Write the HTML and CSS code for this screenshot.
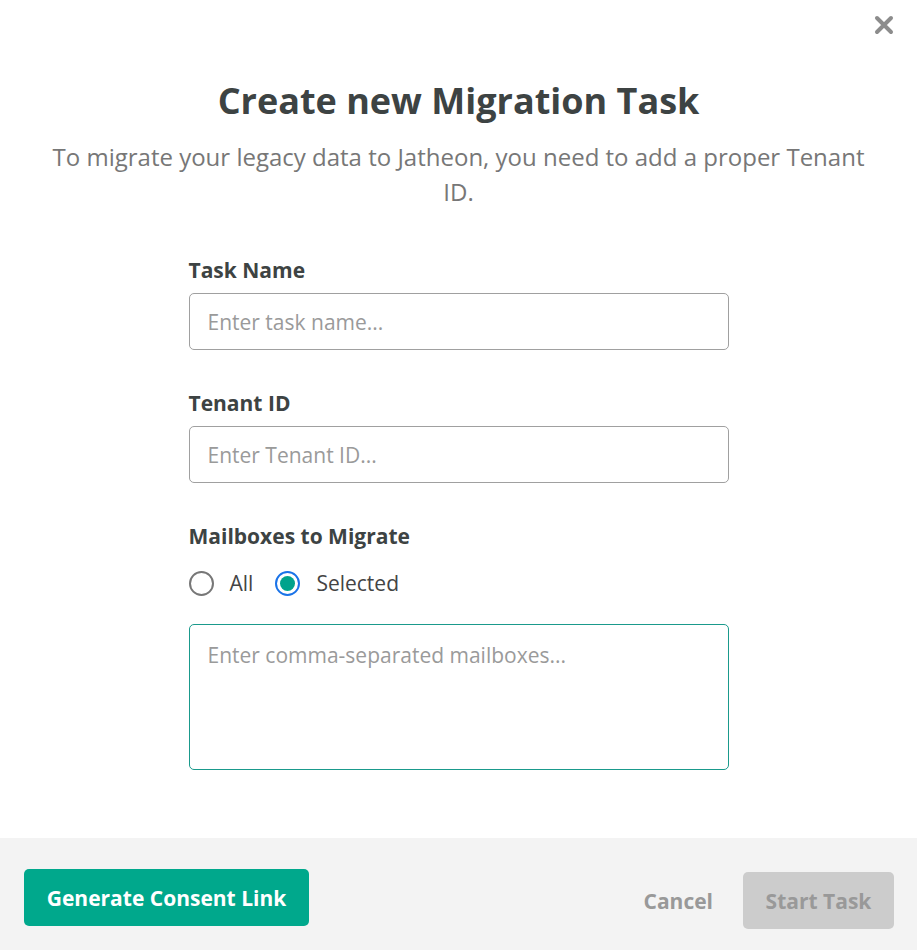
FILE: index.html
```html
<!DOCTYPE html>
<html>
<head>
<meta charset="utf-8">
<link rel="stylesheet" href="styles.css">
</head>
<body>
<div class="modal">
  <div class="body">
    <button class="close" aria-label="Close">
      <svg width="20" height="20" viewBox="0 0 20 20"><path d="M3 3 L17 17 M17 3 L3 17" stroke="#8c8c8c" stroke-width="4" stroke-linecap="round"/></svg>
    </button>
    <h1 class="title">Create new Migration Task</h1>
    <p class="subtitle">To migrate your legacy data to Jatheon, you need to add a proper Tenant ID.</p>
    <form class="form">
      <div class="field">
        <label class="label">Task Name</label>
        <input class="input" type="text" placeholder="Enter task name...">
      </div>
      <div class="field">
        <label class="label">Tenant ID</label>
        <input class="input" type="text" placeholder="Enter Tenant ID...">
      </div>
      <div class="field">
        <label class="label">Mailboxes to Migrate</label>
        <div class="radios">
          <span class="radio"><span class="circle"></span><span class="rtext">All</span></span>
          <span class="radio"><span class="circle on"></span><span class="rtext">Selected</span></span>
        </div>
        <textarea class="textarea" placeholder="Enter comma-separated mailboxes..."></textarea>
      </div>
    </form>
  </div>
  <div class="footer">
    <button class="btn primary" type="button">Generate Consent Link</button>
    <div class="right">
      <button class="btn link" type="button">Cancel</button>
      <button class="btn disabled" type="button">Start Task</button>
    </div>
  </div>
</div>
</body>
</html>
```
FILE: styles.css
```css
* { box-sizing: border-box; }
html, body { margin: 0; padding: 0; background: #fff; }
body { font-family: "Open Sans", "Noto Sans", sans-serif; color: #3d4343; }
.modal { width: 917px; height: 950px; display: flex; flex-direction: column; }
.body { flex: 1; position: relative; padding-top: 77px; }
.close { position: absolute; top: 15px; right: 23px; border: 0; background: none; padding: 0; width: 20px; height: 20px; cursor: pointer; }
.close svg { display: block; }
.title { margin: 0; text-align: center; font-size: 36px; font-weight: 700; line-height: 48px; color: #3d4343; }
.subtitle { margin: 14px 0 0; padding: 0 40px; text-align: center; font-size: 24px; line-height: 35px; color: #777; }
.form { width: 540px; margin: 47px auto 0; display: flex; flex-direction: column; gap: 39px; }
.field { display: flex; flex-direction: column; }
.label { font-size: 21px; font-weight: 700; line-height: 28px; margin-bottom: 9px; color: #3d4343; }
.input { height: 57px; border: 1px solid #a0a0a0; border-radius: 5px; padding: 0 18px; font-family: inherit; font-size: 21px; color: #333; outline: none; }
.input::placeholder, .textarea::placeholder { color: #9a9a9a; }
.radios { display: flex; gap: 22px; align-items: center; height: 36px; margin-top: 6px; }
.radio { display: flex; align-items: center; gap: 16px; font-size: 21px; color: #444; }
.circle { width: 25px; height: 25px; border: 2px solid #777; border-radius: 50%; display: inline-block; position: relative; }
.circle.on { border-color: #1a73e8; }
.circle.on::after { content: ""; position: absolute; left: 3px; top: 3px; width: 15px; height: 15px; border-radius: 50%; background: #00a38c; }
.textarea { margin-top: 23px; height: 146px; border: 1px solid #1a9a8c; border-radius: 5px; padding: 16px 18px; font-family: inherit; font-size: 21px; line-height: 28px; resize: none; outline: none; }
.footer { height: 112px; background: #f3f3f3; display: flex; align-items: flex-start; justify-content: space-between; padding: 31px 23px 0 24px; }
.right { display: flex; align-items: center; gap: 30px; margin-top: 3px; }
.btn { font-family: inherit; font-weight: 700; font-size: 21px; border: 0; border-radius: 5px; height: 57px; cursor: pointer; }
.primary { background: #00a88c; color: #fff; padding: 0 20px; width: 285px; }
.link { background: none; color: #999; padding: 0; }
.disabled { background: #cccccc; color: #999; width: 151px; }
```
